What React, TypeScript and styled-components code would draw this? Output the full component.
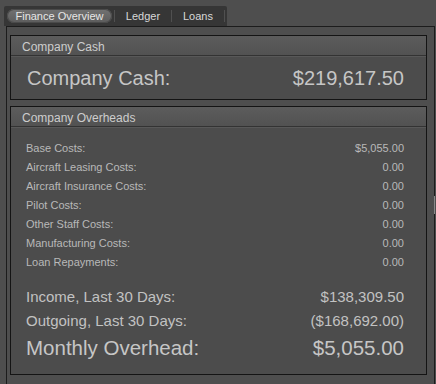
import React from "react";
import styled, { createGlobalStyle } from "styled-components";

const Global = createGlobalStyle`
  html, body { margin: 0; padding: 0; background: #4e4e4e; }
  body { font-family: "Liberation Sans", Arial, sans-serif; }
  * { box-sizing: border-box; }
`;

const Page = styled.div`
  width: 436px;
  height: 384px;
  padding-top: 6px;
  background: #4e4e4e;
  overflow: hidden;
  position: relative;
`;

const TabBar = styled.div`
  margin-left: 4px;
  width: 223px;
  height: 20px;
  background: #363636;
  border-radius: 2px 2px 0 0;
  display: flex;
  align-items: center;
  padding-left: 3px;
`;

const Tab = styled.div<{ $active?: boolean; $w: number }>`
  width: ${(p) => p.$w}px;
  height: 14px;
  display: flex;
  align-items: center;
  justify-content: center;
  font-size: 11px;
  color: ${(p) => (p.$active ? "#e6e6e6" : "#d8d8d8")};
  background: ${(p) =>
    p.$active ? "linear-gradient(#727272, #5c5c5c)" : "transparent"};
  border-radius: 7px;
  box-shadow: ${(p) => (p.$active ? "inset 0 0 0 1px #4a4a4a" : "none")};
`;

const Sep = styled.div`
  width: 1px;
  height: 12px;
  background: #1e1e1e;
  border-right: 1px solid #505050;
  margin: 0 2px;
`;

const Panel = styled.div`
  margin-left: 6px;
  width: 429px;
  height: 358px;
  border: 1px solid #1c1c1c;
  border-bottom: none;
  padding: 8px 7px 0 3px;
  display: flex;
  flex-direction: column;
  gap: 6px;
`;

const Group = styled.section`
  border: 1px solid #141414;
  background: #4c4c4c;
  display: flex;
  flex-direction: column;
`;

const GroupHeader = styled.div`
  height: 20px;
  background: linear-gradient(#5c5c5c, #525252);
  border-bottom: 1px solid #333;
  box-shadow: 0 1px 0 #585858;
  color: #cdcdcd;
  font-size: 12px;
  display: flex;
  align-items: center;
  padding: 2px 0 0 11px;
`;

const CashBody = styled.div`
  height: 43px;
  display: flex;
  align-items: center;
  padding: 1px 22px 0 16px;
`;

const OverBody = styled.div`
  padding: 11px 22px 0 15px;
  height: 247px;
  display: flex;
  flex-direction: column;
`;

const Row = styled.div<{ $size: number; $h: number; $color: string }>`
  display: flex;
  justify-content: space-between;
  align-items: center;
  width: 100%;
  height: ${(p) => p.$h}px;
  font-size: ${(p) => p.$size}px;
  color: ${(p) => p.$color};
`;

const Spacer = styled.div<{ $h: number }>`
  height: ${(p) => p.$h}px;
  flex: none;
`;

const Grip = styled.div`
  position: absolute;
  left: 434px;
  top: 196px;
  width: 1px;
  height: 18px;
  background: #8a8a8a;
`;

const items: [string, string][] = [
  ["Base Costs:", "$5,055.00"],
  ["Aircraft Leasing Costs:", "0.00"],
  ["Aircraft Insurance Costs:", "0.00"],
  ["Pilot Costs:", "0.00"],
  ["Other Staff Costs:", "0.00"],
  ["Manufacturing Costs:", "0.00"],
  ["Loan Repayments:", "0.00"],
];

export default function App() {
  return (
    <Page>
      <Global />
      <TabBar>
        <Tab $active $w={105}>Finance Overview</Tab>
        <Sep />
        <Tab $w={52}>Ledger</Tab>
        <Sep />
        <Tab $w={48}>Loans</Tab>
        <Sep />
      </TabBar>
      <Panel>
        <Group>
          <GroupHeader>Company Cash</GroupHeader>
          <CashBody>
            <Row $size={20} $h={28} $color="#c6c6c6">
              <span>Company Cash:</span>
              <span>$219,617.50</span>
            </Row>
          </CashBody>
        </Group>
        <Group>
          <GroupHeader>Company Overheads</GroupHeader>
          <OverBody>
            {items.map(([l, v]) => (
              <Row key={l} $size={11} $h={19} $color="#b9b9b9">
                <span>{l}</span>
                <span>{v}</span>
              </Row>
            ))}
            <Spacer $h={15} />
            <Row $size={15} $h={20} $color="#c2c2c2">
              <span>Income, Last 30 Days:</span>
              <span>$138,309.50</span>
            </Row>
            <Spacer $h={4} />
            <Row $size={15} $h={20} $color="#c2c2c2">
              <span>Outgoing, Last 30 Days:</span>
              <span>($168,692.00)</span>
            </Row>
            <Spacer $h={3} />
            <Row $size={20.5} $h={30} $color="#c6c6c6">
              <span>Monthly Overhead:</span>
              <span>$5,055.00</span>
            </Row>
          </OverBody>
        </Group>
      </Panel>
      <Grip />
    </Page>
  );
}
